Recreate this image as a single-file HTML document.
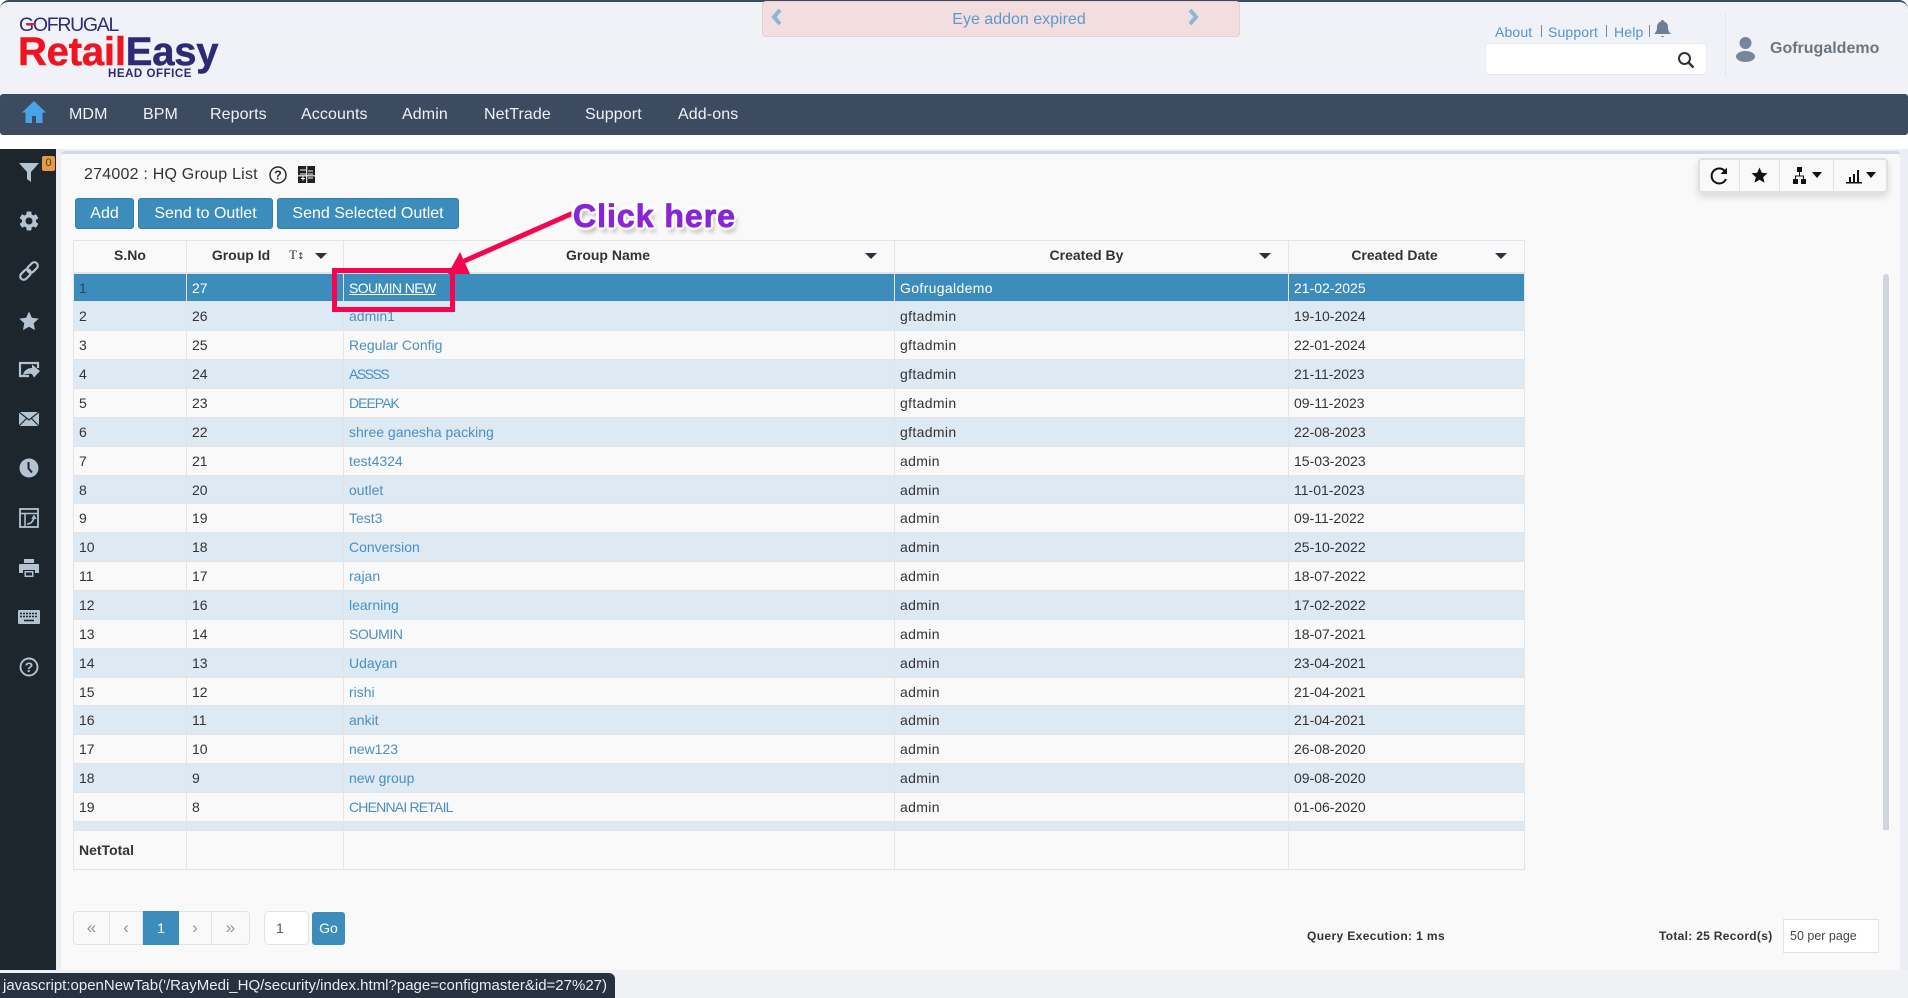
<!DOCTYPE html>
<html><head><meta charset="utf-8"><title>HQ Group List</title>
<style>
*{box-sizing:border-box}
html,body{margin:0;padding:0;width:1908px;height:998px;overflow:hidden;background:#fff;font-family:"Liberation Sans",sans-serif;font-size:14px;color:#333}
.a{position:absolute;white-space:nowrap}
#hdr{position:absolute;left:0;top:0;width:1908px;height:100px;background:#f0f2f7;border-top:2px solid #3c4b60;border-radius:9px 9px 0 0}
#nav{position:absolute;left:0;top:94px;width:1908px;height:41px;background:#3c4b60;border-radius:3px}
.n{position:absolute;top:94px;height:41px;line-height:42px;color:#eff2f6;font-size:16px;letter-spacing:.1px;white-space:nowrap}
.l{position:absolute;top:23px;color:#4f94cd;font-size:14px;line-height:18px;letter-spacing:.15px}
.s{position:absolute;top:25px;width:1px;height:12px;background:#7b8794}
#side{position:absolute;left:0;top:149px;width:56px;height:821px;background:#1d262c}
#side svg{position:absolute;left:18px;width:22px;height:22px}
#bg{position:absolute;left:56px;top:149px;width:1852px;height:821px;background:#ebeef4}
#pan{position:absolute;left:61px;top:151px;width:1839px;height:819px;background:#f9f9f9;border-top:3px solid #d4d9e1;border-radius:4px 4px 0 0}
#bot{position:absolute;left:0;top:970px;width:1908px;height:28px;background:#eff1f5}
.b{position:absolute;top:198px;height:31px;line-height:29px;background:#3c8dbc;border:1px solid #367fa9;border-radius:3px;color:#fff;font-size:16px;text-align:center}
table{position:absolute;left:73px;top:240px;width:1452px;border-collapse:separate;border-spacing:0;table-layout:fixed;border-left:1px solid #e2e4e7;border-top:1px solid #e2e4e7;font-size:14px}
td,th{padding:0 0 0 5px;border-right:1px solid #e2e4e7;border-bottom:1px solid #e2e4e7;white-space:nowrap;overflow:hidden;text-align:left;font-weight:normal;height:29px;line-height:16px;color:#333}
th{height:33px;font-weight:bold;text-align:center;padding:0 0 3px 0;border-bottom-width:2px;background:#f9f9f9;color:#333}
td a{color:#4a8fc4;text-decoration:none}
tr.o td{background:#dde9f3}
tr.e td{background:#f9f9f9}
tr.h td{height:28px}
tr.sel td{background:#3c8dbc;color:#fff}
tr.sel td:first-child{color:#29465c}
tr.sel a{color:#fff;text-decoration:underline}
tr.p td{height:9px;background:#dde9f3}
tr.t td{height:39px;background:#f9f9f9;font-weight:bold}
.g{letter-spacing:.35px}
.c{position:absolute;width:0;height:0;border-left:6px solid transparent;border-right:6px solid transparent;border-top:6px solid #2b3342}
.pg{position:absolute;top:911px;height:34px;line-height:31px;text-align:center;border:1px solid #dfe3ea;background:#f9f9f9;color:#8a94a4;font-size:17px}
</style></head><body>

<div id="hdr"></div>
<div id="nav"></div>

<!-- logo -->
<div class="a" style="left:19px;top:14px;font-size:19.5px;line-height:22px;color:#2f2d73;letter-spacing:-1.3px">GOFRUGAL</div>
<div class="a" style="left:26px;top:23px;width:9px;height:2px;background:#ee1c25"></div>
<div class="a" style="left:18px;top:30px;font-size:40px;line-height:44px;font-weight:bold;letter-spacing:-.2px;color:#ee1520;-webkit-text-stroke:.5px #ee1520">Retail<span style="color:#2e2a78;-webkit-text-stroke:.5px #2e2a78">Easy</span></div>
<div class="a" style="left:108px;top:67px;font-size:11.5px;line-height:14px;font-weight:bold;color:#2e2a78;letter-spacing:.55px">HEAD OFFICE</div>

<!-- banner -->
<div class="a" style="left:762px;top:1px;width:478px;height:36px;background:#f2dede;border:1px solid #ebccd1;border-radius:4px;text-align:center;line-height:36px;font-size:16px;color:#5b9ad0;padding-left:36px">Eye addon expired</div>
<svg class="a" style="left:771px;top:8px" width="12" height="18" viewBox="0 0 12 18"><path d="M9 2 3 9l6 7" fill="none" stroke="#8db6d2" stroke-width="4"/></svg>
<svg class="a" style="left:1187px;top:8px" width="12" height="18" viewBox="0 0 12 18"><path d="M3 2l6 7-6 7" fill="none" stroke="#8db6d2" stroke-width="4"/></svg>

<!-- top right -->
<div class="l" style="left:1495px">About</div><div class="s" style="left:1541px"></div>
<div class="l" style="left:1548px">Support</div><div class="s" style="left:1606px"></div>
<div class="l" style="left:1614px">Help</div><div class="s" style="left:1649px"></div>
<svg class="a" style="left:1654px;top:19px" width="17" height="20" viewBox="0 0 17 20"><path d="M8.5 1c1 0 1.500.6 1.500 1.500C12.700 3.200 14 5.500 14 8c0 3.500 1 5 2.500 6.500V15H.5v-.5C2 13 3 11.500 3 8c0-2.500 1.300-4.800 4-5.500C7 1.600 7.500 1 8.500 1zM7 17h3l-1.500 1.500z" fill="#6e7f93"/></svg>
<div class="a" style="left:1485px;top:43px;width:222px;height:32px;background:#fff;border:1px solid #e9ebf1;border-radius:4px"></div>
<svg class="a" style="left:1677px;top:51px" width="18" height="18" viewBox="0 0 18 18"><circle cx="7.500" cy="7.500" r="5.500" fill="none" stroke="#333" stroke-width="2"/><path d="M11.500 11.500l5 5" stroke="#333" stroke-width="2.500"/></svg>
<div class="a" style="left:1725px;top:13px;width:1px;height:63px;background:#e4e6ec"></div>
<svg class="a" style="left:1735px;top:35px" width="21" height="28" viewBox="0 0 21 28"><circle cx="10.500" cy="8" r="6" fill="#77869a"/><ellipse cx="10.500" cy="21.500" rx="9.500" ry="5.500" fill="#77869a"/></svg>
<div class="a" style="left:1770px;top:39px;font-size:16px;line-height:20px;font-weight:bold;color:#6c7580">Gofrugaldemo</div>

<!-- nav -->
<svg class="a" style="left:22px;top:101px" width="24" height="22" viewBox="0 0 24 22"><path d="M12 0 0 11.500h3.500V22H10v-7h4v7h6.500V11.500H24z" fill="#4aa3e8"/></svg>
<div class="n" style="left:69px">MDM</div>
<div class="n" style="left:143px">BPM</div>
<div class="n" style="left:210px">Reports</div>
<div class="n" style="left:301px">Accounts</div>
<div class="n" style="left:402px">Admin</div>
<div class="n" style="left:484px">NetTrade</div>
<div class="n" style="left:585px">Support</div>
<div class="n" style="left:678px">Add-ons</div>

<div id="bg"></div><div id="pan"></div><div id="bot"></div>

<!-- sidebar -->
<div id="side">
<svg style="top:12px" viewBox="0 0 22 22"><path d="M1 2h20l-8 9v10l-4-3v-7z" fill="#b3c3d2"/></svg>
<svg style="top:61px" viewBox="0 0 22 22"><g fill="#b3c3d2"><circle cx="11" cy="11" r="7"/><rect x="8.500" y="1.500" width="5" height="19" rx="1"/><rect x="8.500" y="1.500" width="5" height="19" rx="1" transform="rotate(60 11 11)"/><rect x="8.500" y="1.500" width="5" height="19" rx="1" transform="rotate(120 11 11)"/></g><circle cx="11" cy="11" r="3.500" fill="#1d262c"/></svg>
<svg style="top:111px" viewBox="0 0 22 22"><g fill="none" stroke="#b3c3d2" stroke-width="2.200" transform="rotate(-45 11 11)"><rect x="0" y="7.500" width="12" height="7" rx="3.500"/><rect x="10" y="7.500" width="12" height="7" rx="3.500"/></g></svg>
<svg style="top:161px" viewBox="0 0 22 22"><path d="M11 1.500l2.900 6.300 6.800.8-5 4.700 1.300 6.800-6-3.400-6 3.400 1.300-6.800-5-4.700 6.800-.8z" fill="#b3c3d2"/></svg>
<svg style="top:210px" viewBox="0 0 22 22"><path d="M20 9V4H2v13h9" fill="none" stroke="#b3c3d2" stroke-width="2.200"/><path d="M5 16c1-5 5-7 9-7V5.500l8 6.500-6 6.500-2-3.500c-4-.5-6 0-9 1z" fill="#b3c3d2"/></svg>
<svg style="top:259px" viewBox="0 0 22 22"><rect x="1" y="4" width="20" height="14" fill="#b3c3d2"/><path d="M1 4l10 8 10-8M1 18l8-8M21 18l-8-8" fill="none" stroke="#1d262c" stroke-width="1.200"/></svg>
<svg style="top:308px" viewBox="0 0 22 22"><circle cx="11" cy="11" r="9.500" fill="#b3c3d2"/><path d="M10.500 5v6.500l3.500 4" fill="none" stroke="#1d262c" stroke-width="2"/></svg>
<svg style="top:358px" viewBox="0 0 22 22"><rect x="2" y="2" width="18" height="18" fill="none" stroke="#b3c3d2" stroke-width="1.800"/><path d="M2 6.500h18M7 6.500V20" stroke="#b3c3d2" stroke-width="1.500"/><path d="M9 17c3 0 6-2 7-6M14 12l2-3 2 3" fill="none" stroke="#b3c3d2" stroke-width="1.500"/></svg>
<svg style="top:408px" viewBox="0 0 22 22"><path d="M6 2h10v4H6zM2 7h18a1 1 0 0 1 1 1v8h-4v-3H5v3H1V8a1 1 0 0 1 1-1zM6.500 14h9v6h-9z" fill="#b3c3d2"/><rect x="8" y="15.500" width="6" height="3" fill="#1d262c"/></svg>
<svg style="top:457px" viewBox="0 0 22 22"><rect x="0" y="4" width="22" height="14" rx="1" fill="#b3c3d2"/><path d="M2 7.500h18M2 10.500h18" stroke="#1d262c" stroke-width="1.400" stroke-dasharray="2 1"/><path d="M6 14.500h10" stroke="#1d262c" stroke-width="1.600"/></svg>
<svg style="top:507px" viewBox="0 0 22 22"><circle cx="11" cy="11" r="8.500" fill="none" stroke="#b3c3d2" stroke-width="1.900"/><text x="11" y="16" text-anchor="middle" font-family="Liberation Sans" font-weight="bold" font-size="14" fill="#b3c3d2">?</text></svg>
<div class="a" style="left:42px;top:7px;width:13px;height:15px;background:#e69a45;border-radius:2px;text-align:center;font-size:11px;line-height:15px;color:#40382e">0</div>
</div>

<!-- title -->
<div class="a" style="left:84px;top:165px;font-size:16px;line-height:20px;letter-spacing:.22px;color:#333">274002 : HQ Group List</div>
<svg class="a" style="left:269px;top:166px" width="18" height="18" viewBox="0 0 18 18"><circle cx="9" cy="9" r="8" fill="none" stroke="#2b2b2b" stroke-width="1.500"/><text x="9" y="13.500" text-anchor="middle" font-family="Liberation Sans" font-weight="bold" font-size="12.500" fill="#2b2b2b">?</text></svg>
<svg class="a" style="left:298px;top:166px" width="17" height="17" viewBox="0 0 17 17"><rect width="17" height="17" fill="#1f2024"/><path d="M2 4h6M10 5h5M10 8h5M2 8h6M10 12h5M3 12.500h4M5 10.500v4M8.700 0v17M0 9.800h17" stroke="#f9f9f9" stroke-width="1.100"/></svg>

<!-- buttons -->
<div class="b" style="left:75px;width:59px">Add</div>
<div class="b" style="left:138px;width:135px">Send to Outlet</div>
<div class="b" style="left:277px;width:182px">Send Selected Outlet</div>

<!-- toolbar -->
<div class="a" style="left:1698px;top:158px;width:190px;height:35px;background:#f9f9f9;border:2px solid #dfe1e6;border-radius:4px;box-shadow:0 4px 8px rgba(0,0,0,.13)"></div>
<div class="a" style="left:1739px;top:159px;width:1px;height:33px;background:#dfe1e6"></div>
<div class="a" style="left:1779px;top:159px;width:1px;height:33px;background:#dfe1e6"></div>
<div class="a" style="left:1833px;top:159px;width:1px;height:33px;background:#dfe1e6"></div>
<svg class="a" style="left:1709px;top:166px" width="20" height="20" viewBox="0 0 20 20"><path d="M16.500 6A7.500 7.500 0 1 0 17 13" fill="none" stroke="#111" stroke-width="2"/><path d="M18 1.500V8h-6.500z" fill="#111"/></svg>
<svg class="a" style="left:1751px;top:167px" width="17" height="17" viewBox="0 0 17 17"><path d="M8.500.5l2.300 5.200 5.700.6-4.300 3.800 1.300 5.600-5-2.900-5 2.900 1.300-5.600L.5 6.300l5.700-.6z" fill="#111"/></svg>
<svg class="a" style="left:1793px;top:166px" width="30" height="19" viewBox="0 0 30 19"><path d="M4 1h5v5H4zM0 13h5v5H0zM8 13h5v5H8z" fill="#111"/><path d="M6.500 6v4M2.500 13v-3h8v3" fill="none" stroke="#111" stroke-width="1"/><path d="M19 6h10l-5 6z" fill="#111"/></svg>
<svg class="a" style="left:1846px;top:166px" width="31" height="19" viewBox="0 0 31 19"><path d="M0 16h16v1.500H0z" fill="#111"/><path d="M3 11h2v5H3zM7 8h2v8H7zM11 4h2v12h-2z" fill="#111"/><path d="M20 6h10l-5 6z" fill="#111"/></svg>

<!-- table -->
<table>
<colgroup><col style="width:113px"><col style="width:157px"><col style="width:551px"><col style="width:394px"><col style="width:236px"></colgroup>
<tr><th>S.No</th><th style="padding-right:48px">Group Id</th><th style="padding-right:22px">Group Name</th><th style="padding-right:10px">Created By</th><th style="padding-right:24px">Created Date</th></tr>
<tr class="sel h"><td>1</td><td>27</td><td><a style="letter-spacing:-.6px">SOUMIN NEW</a></td><td class="g">Gofrugaldemo</td><td>21-02-2025</td></tr>
<tr class="o"><td>2</td><td>26</td><td><a>admin1</a></td><td class="g">gftadmin</td><td>19-10-2024</td></tr>
<tr class="e"><td>3</td><td>25</td><td><a>Regular Config</a></td><td class="g">gftadmin</td><td>22-01-2024</td></tr>
<tr class="o"><td>4</td><td>24</td><td><a style="letter-spacing:-1.5px">ASSSS</a></td><td class="g">gftadmin</td><td>21-11-2023</td></tr>
<tr class="e"><td>5</td><td>23</td><td><a style="letter-spacing:-1px">DEEPAK</a></td><td class="g">gftadmin</td><td>09-11-2023</td></tr>
<tr class="o"><td>6</td><td>22</td><td><a>shree ganesha packing</a></td><td class="g">gftadmin</td><td>22-08-2023</td></tr>
<tr class="e"><td>7</td><td>21</td><td><a>test4324</a></td><td class="g">admin</td><td>15-03-2023</td></tr>
<tr class="o h"><td>8</td><td>20</td><td><a>outlet</a></td><td class="g">admin</td><td>11-01-2023</td></tr>
<tr class="e"><td>9</td><td>19</td><td><a>Test3</a></td><td class="g">admin</td><td>09-11-2022</td></tr>
<tr class="o"><td>10</td><td>18</td><td><a>Conversion</a></td><td class="g">admin</td><td>25-10-2022</td></tr>
<tr class="e"><td>11</td><td>17</td><td><a>rajan</a></td><td class="g">admin</td><td>18-07-2022</td></tr>
<tr class="o"><td>12</td><td>16</td><td><a>learning</a></td><td class="g">admin</td><td>17-02-2022</td></tr>
<tr class="e"><td>13</td><td>14</td><td><a style="letter-spacing:-.4px">SOUMIN</a></td><td class="g">admin</td><td>18-07-2021</td></tr>
<tr class="o"><td>14</td><td>13</td><td><a>Udayan</a></td><td class="g">admin</td><td>23-04-2021</td></tr>
<tr class="e h"><td>15</td><td>12</td><td><a>rishi</a></td><td class="g">admin</td><td>21-04-2021</td></tr>
<tr class="o"><td>16</td><td>11</td><td><a>ankit</a></td><td class="g">admin</td><td>21-04-2021</td></tr>
<tr class="e"><td>17</td><td>10</td><td><a>new123</a></td><td class="g">admin</td><td>26-08-2020</td></tr>
<tr class="o"><td>18</td><td>9</td><td><a>new group</a></td><td class="g">admin</td><td>09-08-2020</td></tr>
<tr class="e"><td>19</td><td>8</td><td><a style="letter-spacing:-.8px">CHENNAI RETAIL</a></td><td class="g">admin</td><td>01-06-2020</td></tr>
<tr class="p"><td></td><td></td><td></td><td></td><td></td></tr>
<tr class="t"><td>NetTotal</td><td></td><td></td><td></td><td></td></tr>
</table>

<!-- header sort icons -->
<div class="a" style="left:289px;top:247px;font-family:'Liberation Serif',serif;font-size:13px;line-height:16px;color:#333">T<span style="font-size:9px;font-family:'DejaVu Sans',sans-serif">↕</span></div>
<div class="c" style="left:315px;top:253px"></div>
<div class="c" style="left:865px;top:253px"></div>
<div class="c" style="left:1259px;top:253px"></div>
<div class="c" style="left:1495px;top:253px"></div>

<!-- scrollbar -->
<div class="a" style="left:1883px;top:274px;width:6px;height:556px;background:#d1d5dd;border-radius:3px 3px 0 0"></div>

<!-- pagination -->
<div class="pg" style="left:73px;width:37px;border-radius:4px 0 0 4px">«</div>
<div class="pg" style="left:110px;width:33px;border-left:0">‹</div>
<div class="pg" style="left:143px;width:36px;background:#3c8dbc;border-color:#3c8dbc;color:#fff;font-size:14px;line-height:32px">1</div>
<div class="pg" style="left:179px;width:33px;border-left:0">›</div>
<div class="pg" style="left:212px;width:38px;border-left:0;border-radius:0 4px 4px 0">»</div>
<div class="a" style="left:264px;top:911px;width:45px;height:34px;background:#fff;border:1px solid #dfe3ea;border-radius:5px;line-height:32px;padding-left:11px;color:#555">1</div>
<div class="a" style="left:312px;top:912px;width:33px;height:33px;background:#3c8dbc;border-radius:3px;color:#fff;text-align:center;line-height:33px">Go</div>

<!-- footer -->
<div class="a" style="left:1307px;top:928px;font-size:12px;line-height:16px;font-weight:bold;letter-spacing:.38px;color:#333">Query Execution: 1 ms</div>
<div class="a" style="left:1659px;top:928px;font-size:12px;line-height:16px;font-weight:bold;letter-spacing:.3px;color:#333">Total: 25 Record(s)</div>
<div class="a" style="left:1783px;top:919px;width:96px;height:34px;background:#fff;border:1px solid #dde0ea;padding-left:6px;line-height:32px;font-size:12.500px;color:#444">50 per page</div>

<!-- status bar -->
<div class="a" style="left:0;top:973px;width:615px;height:25px;background:#27313f;border-radius:0 6px 0 0;color:#e9ecf0;font-size:15px;line-height:25px;padding-left:3px">javascript:openNewTab('/RayMedi_HQ/security/index.html?page=configmaster&amp;id=27%27)</div>

<!-- annotation -->
<svg class="a" style="left:0;top:0;overflow:visible" width="1908" height="998">
<rect x="334.500" y="270.500" width="118" height="39" fill="none" stroke="#f5054f" stroke-width="5"/>
<path d="M571 214 462 262" stroke="#f5054f" stroke-width="5" stroke-linecap="round"/>
<path d="M448 274 460 252 470 274z" fill="#f5054f"/>
</svg>
<div class="a" style="left:573px;top:198px;font-size:32px;line-height:36px;font-weight:bold;letter-spacing:1px;color:#8a25d6;-webkit-text-stroke:.8px #8a25d6;text-shadow:3px 0 0 #fff,-3px 0 0 #fff,0 3px 0 #fff,0 -3px 0 #fff,2px 2px 0 #fff,-2px 2px 0 #fff,2px -2px 0 #fff,-2px -2px 0 #fff,3px 5px 5px rgba(0,0,0,.3)">Click here</div>

</body></html>
